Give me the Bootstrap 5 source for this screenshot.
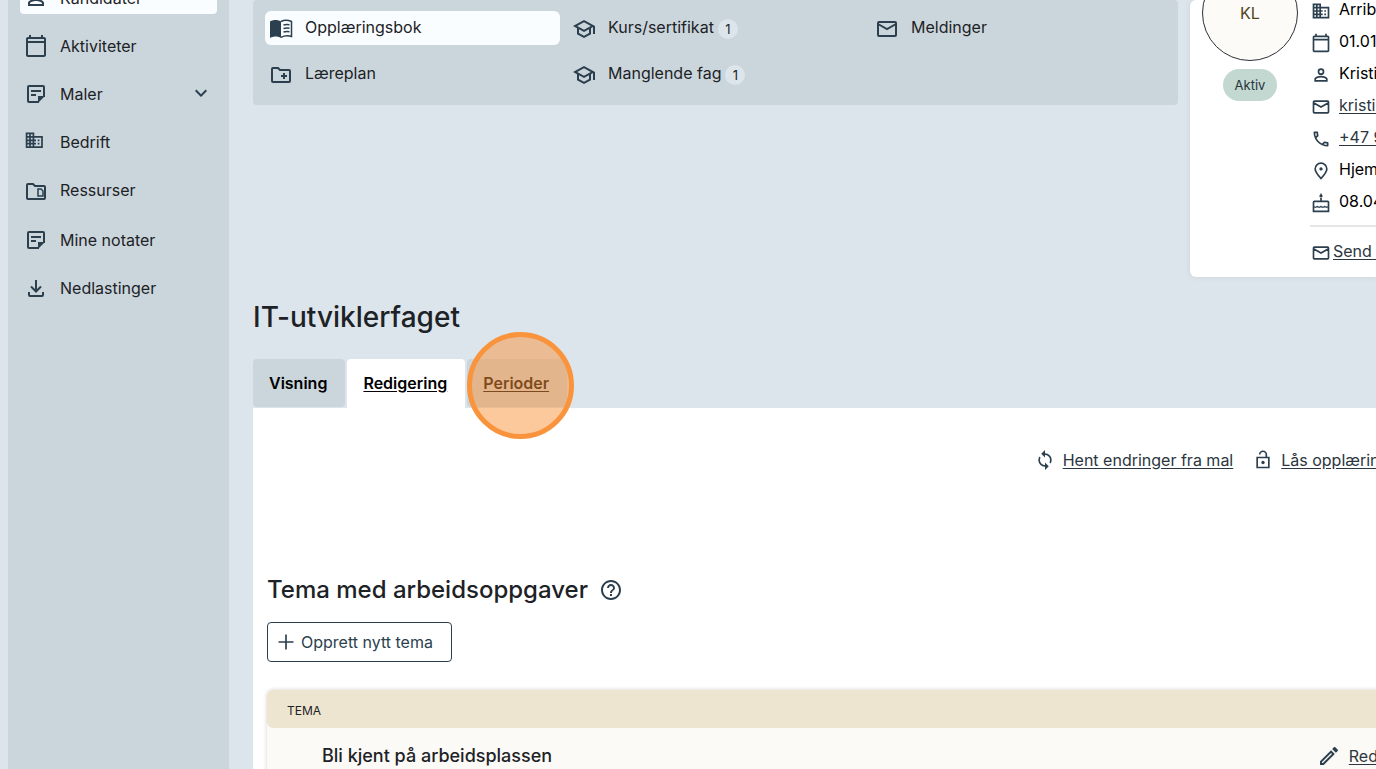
<!DOCTYPE html>
<html lang="nb">
<head>
<meta charset="utf-8">
<meta name="viewport" content="width=device-width, initial-scale=1">
<title>IT-utviklerfaget – Opplæringsbok</title>
<link href="https://cdn.jsdelivr.net/npm/bootstrap@5.3.0/dist/css/bootstrap.min.css" rel="stylesheet">
<style>
:root { --page: #dce5eb; --panel: #cbd6dc; --ink: #1d2226; --icon: #2b3f4e; }
body { font-family: Inter, "Liberation Sans", sans-serif; font-size: 16px; line-height: 24px; color: var(--ink); background: var(--page); }
a { color: inherit; }
svg { fill: currentColor; flex: none; display: block; width: 24px; height: 24px; color: var(--icon); }
.line { fill: none; stroke: currentColor; stroke-width: 2; }
.thin { stroke-width: 1.5; }
.shell { min-height: 100vh; overflow: hidden; padding-left: 8px; }
.side { flex: 0 0 221px; background: var(--panel); padding: 0 12px; }
.side nav { margin-top: -18px; gap: 16px; }
.side .nav-link { height: 32px; padding: 0 4px; gap: 12px; color: var(--ink); border-radius: 4px; }
.side .nav-link.active, .books .nav-link.active { background: #f9fdff; }
.side .group { margin-top: 2px; }
main { min-width: 0; padding-left: 24px; }
.top { height: 277px; gap: 12px; }
.books { background: var(--panel); border-radius: 4px; height: 105px; padding: 11px 12px 0; display: grid; grid-template-columns: repeat(3, 1fr); grid-auto-rows: 34px; gap: 12px 8px; }
.books .nav-link { padding: 0 4px 2px; gap: 12px; color: var(--ink); border-radius: 6px; }
.books svg { margin-top: 4px; }
.count { width: 20px; height: 20px; border-radius: 10px; background: var(--page); font-size: 13px; line-height: 20px; margin: 4px 0 0 -8px; text-align: center; }
.profile { flex: 0 0 186px; background: #fff; border-radius: 6px 0 0 6px; box-shadow: 0 0 4px #b8c4cc80; padding-left: 12px; gap: 12px; white-space: nowrap; overflow: hidden; }
.profile svg { width: 20px; height: 20px; margin-top: 4px; }
.avatar { width: 96px; height: 96px; margin-top: -35px; border: 1px solid #2b3036; border-radius: 50%; background: #fdfbf8; color: #4f4420; }
.status { background: #c2d8d1; border-radius: 16px; height: 32px; padding: 0 12px; margin-top: 8px; font-size: 13px; line-height: 32px; color: #26343a; }
.facts { margin-top: -7px; color: #000; }
.facts ul, .send { padding-left: 1px; }
.facts li { height: 32px; line-height: 32px; gap: 8px; display: flex; align-items: center; }
.facts a, .acts a, .edit a { color: #2b3640; text-underline-offset: 2px; }
.send { border-top: 2px solid #e3e5e7; padding-top: 12px; margin-top: 8px; gap: 2px; }
h1 { font-size: 28px; line-height: 36px; font-weight: 500; margin: 22px 0 24px; }
.tabs { gap: 2px; height: 49px; }
.tabs .nav-link { height: 48px; padding: 0 18px 0 16px; line-height: 48px; font-weight: 600; color: #000; background: var(--panel); border-radius: 4px; }
.tabs .nav-link.active { background: #fff; height: 49px; border-radius: 4px 4px 0 0; }
.tabs u { text-underline-offset: 2px; }
.spot { position: absolute; left: 0; top: -27px; width: 107px; height: 107px; border: 5px solid #f9933c; border-radius: 50%; background: #f9933c80; pointer-events: none; }
.sheet { background: #fff; margin-right: -60px; padding: 40px 0 0 14px; min-height: 361px; white-space: nowrap; }
.acts { gap: 20px; padding-right: 10px; margin-bottom: 102px; }
.acts a { margin-left: 8px; }
.acts svg, .edit svg { width: 20px; height: 20px; }
h2 { font-size: 24px; line-height: 32px; font-weight: 500; margin: 0 11px 0 0; }
.new { height: 40px; padding: 0 18px 0 8px; gap: 5px; border: 1px solid var(--icon); border-radius: 4px; color: var(--icon); margin: 16px 0 28px; }
.new svg { width: 20px; height: 20px; }
.themes { box-shadow: 0 0 4px #00000030; border-radius: 6px; background: #fcfaf6; }
.themes table { width: 100%; }
.themes th { height: 38px; padding: 4px 20px 0; font-size: 12px; font-weight: 400; background: #ede5d0; border-radius: 6px; }
.themes td { height: 56px; padding: 0 29px 0 55px; font-size: 18px; font-weight: 500; }
.themes .edit { font-size: 16px; font-weight: 400; gap: 10px; }
</style>
</head>
<body>
<svg class="d-none" aria-hidden="true">
  <symbol id="cal" viewBox="0 0 24 24"><path d="M20 3h-1V1h-2v2H7V1H5v2H4c-1.100 0-2 .9-2 2v16c0 1.100.9 2 2 2h16c1.100 0 2-.9 2-2V5c0-1.100-.9-2-2-2zm0 2v2H4V5h16zM4 21V9h16v12z"/></symbol>
  <symbol id="person" viewBox="0 0 24 24"><path d="M12 6a2 2 0 1 1 0 4 2 2 0 0 1 0-4m0 9c2.700 0 5.800 1.290 6 2v1H6v-1c.2-.71 3.300-2 6-2m0-11a4 4 0 1 0 0 8 4 4 0 0 0 0-8zm0 9c-2.670 0-8 1.340-8 4v3h16v-3c0-2.660-5.330-4-8-4z"/></symbol>
  <symbol id="domain" viewBox="0 0 24 24"><path d="M12 7V3H2v18h20V7zM6 19H4v-2h2zm0-4H4v-2h2zm0-4H4V9h2zm0-4H4V5h2zm4 12H8v-2h2zm0-4H8v-2h2zm0-4H8V9h2zm0-4H8V5h2zm10 12h-8v-2h2v-2h-2v-2h2v-2h-2V9h8zm-2-8h-2v2h2zm0 4h-2v2h2z"/></symbol>
  <symbol id="note" viewBox="0 0 24 24"><path class="line" d="M15 20H5a1 1 0 0 1-1-1V5a1 1 0 0 1 1-1h14a1 1 0 0 1 1 1v10M7 9h10M7 13h5"/><path d="M14 21v-7h7z"/></symbol>
  <symbol id="mail" viewBox="0 0 24 24"><path class="line" d="M4 5h16a1 1 0 0 1 1 1v12a1 1 0 0 1-1 1H4a1 1 0 0 1-1-1V6a1 1 0 0 1 1-1zM3 7l9 5 9-5"/></symbol>
  <symbol id="school" viewBox="0 0 24 24"><path d="M12 3L1 9l4 2.180v6L12 21l7-3.820v-6l2-1.090V17h2V9L12 3zm6.820 6L12 12.720 5.180 9 12 5.280zM17 15.990l-5 2.730-5-2.730v-3.720L12 15l5-2.730z"/></symbol>
</svg>

<div class="shell d-flex">
  <aside class="side">
    <nav class="nav flex-column" aria-label="Hovedmeny">
      <a class="nav-link active d-flex align-items-center" href="#"><svg><use href="#person"/></svg>Kandidater</a>
      <a class="nav-link d-flex align-items-center" href="#"><svg><use href="#cal"/></svg>Aktiviteter</a>
      <a class="nav-link d-flex align-items-center" href="#"><svg><use href="#note"/></svg>Maler
        <svg class="ms-auto" viewBox="0 0 24 24"><path d="M16.600 7.600L12 12.200 7.400 7.600 6 9l6 6 6-6z"/></svg></a>
      <a class="nav-link d-flex align-items-center" href="#"><svg viewBox="0 0 28 28"><use href="#domain" width="24" height="24"/></svg>Bedrift</a>
      <a class="nav-link d-flex align-items-center" href="#"><svg viewBox="0 0 24 24"><path class="line" d="M4 6h5l2 2h9a1 1 0 0 1 1 1v11a1 1 0 0 1-1 1H4a1 1 0 0 1-1-1V7a1 1 0 0 1 1-1z"/><path class="line thin" d="M14 11h3l2 2v5h-5z"/></svg>Ressurser</a>
      <a class="nav-link group d-flex align-items-center" href="#"><svg><use href="#note"/></svg>Mine notater</a>
      <a class="nav-link d-flex align-items-center" href="#"><svg viewBox="0 0 24 24"><path class="line" d="M12 4v11M7 10.500l5 5 5-5M5 16v3a1 1 0 0 0 1 1h12a1 1 0 0 0 1-1v-3"/></svg>Nedlastinger</a>
    </nav>
  </aside>

  <main class="flex-grow-1">
    <div class="top d-flex align-items-stretch">
      <nav class="books flex-grow-1" aria-label="Kandidat">
        <a class="nav-link active d-flex align-items-center" href="#"><svg viewBox="0 0 24 24"><path d="M1 4.500C4 2.500 9 2.500 12 4.500V21c-3-2-7.500-2-11 0z"/><path class="line thin" d="M12 4.500c3-1.500 7-1.500 10.500 0v15c-3-1-7-1-10.500.8M14.500 8c2-.7 4-.7 6-.3M14.500 11.500c2-.7 4-.7 6-.3M14.500 15c2-.7 4-.7 6-.3"/></svg>Opplæringsbok</a>
        <a class="nav-link d-flex align-items-center" href="#"><svg><use href="#school"/></svg>Kurs/sertifikat <span class="count">1</span></a>
        <a class="nav-link d-flex align-items-center" href="#"><svg><use href="#mail"/></svg>Meldinger</a>
        <a class="nav-link d-flex align-items-center" href="#"><svg viewBox="0 0 24 24"><path class="line" d="M4 5h5l2 2h9a1 1 0 0 1 1 1v10a1 1 0 0 1-1 1H4a1 1 0 0 1-1-1V6a1 1 0 0 1 1-1zM12 13h6M15 10v6"/></svg>Læreplan</a>
        <a class="nav-link d-flex align-items-center" href="#"><svg><use href="#school"/></svg>Manglende fag <span class="count">1</span></a>
      </nav>

      <section class="profile d-flex">
        <div class="d-flex flex-column align-items-center">
          <div class="avatar d-flex align-items-center justify-content-center">KL</div>
          <span class="status">Aktiv</span>
        </div>
        <div class="facts">
          <ul class="list-unstyled m-0">
            <li><svg><use href="#domain"/></svg>Arriba</li>
            <li><svg><use href="#cal"/></svg>01.01.</li>
            <li><svg><use href="#person"/></svg>Kristin</li>
            <li><svg><use href="#mail"/></svg><a href="#">kristin</a></li>
            <li><svg viewBox="0 0 24 24"><path d="M6.540 5c.06.89.21 1.760.45 2.590l-1.200 1.200c-.41-1.200-.67-2.470-.76-3.790h1.510m9.860 12.020c.85.24 1.720.39 2.600.45v1.490c-1.320-.09-2.590-.35-3.800-.75l1.200-1.190M7.500 3H4c-.55 0-1 .45-1 1 0 9.390 7.610 17 17 17 .55 0 1-.45 1-1v-3.490c0-.55-.45-1-1-1-1.240 0-2.450-.2-3.570-.57-.1-.04-.21-.05-.31-.05-.26 0-.51.1-.71.29l-2.200 2.200c-2.830-1.450-5.150-3.760-6.590-6.590l2.200-2.200c.28-.28.36-.67.25-1.020C8.700 6.450 8.500 5.250 8.500 4c0-.55-.45-1-1-1z"/></svg><a href="#">+47 9</a></li>
            <li><svg viewBox="0 0 24 24"><path class="line" d="M12 21c-4-4.500-7-8-7-11.500a7 7 0 0 1 14 0c0 3.500-3 7-7 11.500z"/><circle cx="12" cy="9.500" r="2"/></svg>Hjemme</li>
            <li><svg viewBox="0 0 24 24"><path class="line" d="M3 22V11a1 1 0 0 1 1-1h16a1 1 0 0 1 1 1v11zM12 10V6"/><path class="line thin" d="M3 16c1.500 1.500 3 1.500 4.500 0 1.500 1.500 3 1.500 4.500 0 1.500 1.500 3 1.500 4.500 0 1.500 1.500 3 1.500 4.500 0"/><path d="M12 0l2 3.500a2 2 0 0 1-4 0z"/></svg>08.04</li>
          </ul>
          <div class="send d-flex"><svg><use href="#mail"/></svg><a href="#">Send melding</a></div>
        </div>
      </section>
    </div>

    <h1>IT-utviklerfaget</h1>
    <nav class="tabs nav align-items-start" aria-label="Opplæringsbok">
      <a class="nav-link" href="#">Visning</a>
      <a class="nav-link active" href="#"><u>Redigering</u></a>
      <a class="nav-link position-relative" href="#"><u>Perioder</u><span class="spot"></span></a>
    </nav>

    <section class="sheet">
      <div class="acts d-flex justify-content-end">
        <div class="d-flex align-items-center"><svg viewBox="0 0 24 24"><path d="M12 4V0L7.500 4.500 12 9V6c3.310 0 6 2.690 6 6 0 1.010-.25 1.970-.7 2.800l1.460 1.460C19.540 15.030 20 13.570 20 12c0-4.420-3.580-8-8-8zm0 14c-3.310 0-6-2.690-6-6 0-1.010.25-1.970.7-2.800L5.240 7.740C4.460 8.970 4 10.430 4 12c0 4.420 3.580 8 8 8v4l4.500-4.500L12 15z"/></svg><a href="#">Hent endringer fra mal</a></div>
        <div class="d-flex align-items-center"><svg viewBox="0 0 24 24"><path class="line" d="M5 9h14v12H5zM8 5.500a4 4 0 0 1 8 0V9"/><circle cx="12" cy="15" r="2"/></svg><a href="#">Lås opplæringsbok</a></div>
      </div>
      <div class="d-flex align-items-center">
        <h2>Tema med arbeidsoppgaver</h2>
        <svg viewBox="0 0 24 24"><path d="M11 18h2v-2h-2v2zm1-16C6.480 2 2 6.480 2 12s4.480 10 10 10 10-4.480 10-10S17.520 2 12 2zm0 18c-4.410 0-8-3.590-8-8s3.590-8 8-8 8 3.590 8 8-3.590 8-8 8zm0-14c-2.210 0-4 1.790-4 4h2c0-1.100.9-2 2-2s2 .9 2 2c0 2-3 1.750-3 5h2c0-2.250 3-2.500 3-5 0-2.210-1.790-4-4-4z"/></svg>
      </div>
      <button type="button" class="btn new d-flex align-items-center"><svg viewBox="0 0 24 24"><path class="line" d="M12 3v18M3 12h18"/></svg>Opprett nytt tema</button>
      <div class="themes">
        <table>
          <thead><tr><th scope="col" colspan="2">TEMA</th></tr></thead>
          <tbody><tr><td>Bli kjent på arbeidsplassen</td><td><div class="edit d-flex align-items-center justify-content-end"><svg viewBox="2 2 20 20"><path d="M14.060 9.020l.92.92L5.920 19H5v-.92l9.060-9.060M17.660 3c-.25 0-.51.1-.7.290l-1.830 1.830 3.750 3.750 1.830-1.830c.39-.39.39-1.020 0-1.410l-2.340-2.340c-.2-.2-.45-.29-.71-.29zm-3.600 3.190L3 17.250V21h3.750L17.810 9.940z"/></svg><a href="#">Rediger</a></div></td></tr></tbody>
        </table>
      </div>
    </section>
  </main>
</div>
<script src="https://cdn.jsdelivr.net/npm/bootstrap@5.3.0/dist/js/bootstrap.bundle.min.js"></script>
</body>
</html>
